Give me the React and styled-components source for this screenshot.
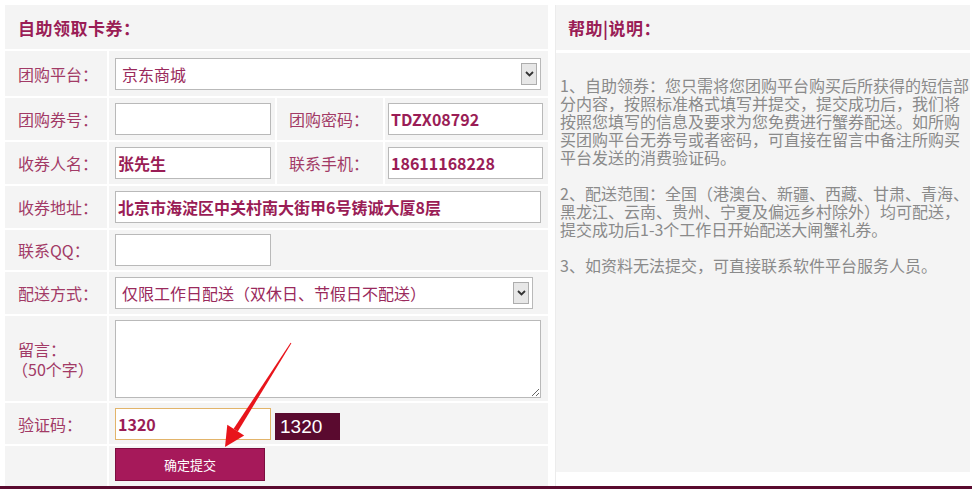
import React from "react";
import styled, { createGlobalStyle } from "styled-components";

const GlobalStyle = createGlobalStyle`
  html, body {
    margin: 0;
    padding: 0;
    background: #fff;
    font-family: "Noto Sans CJK SC", "Microsoft YaHei", sans-serif;
  }
`;

const Page = styled.div`
  position: relative;
  width: 972px;
  height: 489px;
  overflow: hidden;
  background: #fff;
`;

const Main = styled.div`
  display: flex;
  gap: 7px;
  padding: 5px 2px 0 5px;
`;

const FormTable = styled.div`
  display: grid;
  grid-template-columns: 102px 166px 106px 163px;
  grid-template-rows: 44px 45px 42px 42px 42px 40px 42px 85px 41px 40px;
  gap: 2px;
  width: 543px;
  background: #fff;
`;

const Cell = styled.div`
  display: flex;
  align-items: center;
  background: #f4f4f4;
  grid-column: ${(p) => (p.$span ? `span ${p.$span}` : "auto")};
  padding-left: ${(p) => p.$pad || 6}px;
  box-sizing: border-box;
  min-width: 0;
`;

const Title = styled.h2`
  margin: 0;
  font-size: 17px;
  font-weight: bold;
  color: #9a1d56;
  letter-spacing: 0.5px;
`;

const Label = styled.div`
  font-size: 16px;
  color: #a23a66;
  line-height: 20px;
  white-space: nowrap;
`;

const LabelNote = styled.span`
  display: block;
  margin-left: -6px;
`;

const TextInput = styled.div`
  box-sizing: border-box;
  width: ${(p) => p.$w}px;
  height: 32px;
  background: #fff;
  border: 1px solid ${(p) => (p.$focus ? "#e2b46a" : "#b9b9b9")};
  display: flex;
  align-items: center;
  padding-left: 2px;
  font-size: 16px;
  font-weight: bold;
  color: #9a1d56;
  white-space: nowrap;
`;

const SelectBox = styled.div`
  box-sizing: border-box;
  width: ${(p) => p.$w}px;
  height: 32px;
  background: #fff;
  border: 1px solid #b9b9b9;
  display: flex;
  align-items: center;
  justify-content: space-between;
  padding: 0 3px 0 6px;
  font-size: 16px;
  color: #9a2a5c;
  white-space: nowrap;
`;

const ArrowBtn = styled.span`
  box-sizing: border-box;
  width: 16px;
  height: 22px;
  border: 1px solid #adadad;
  background: #e7e7e7;
  display: flex;
  align-items: center;
  justify-content: center;
`;

const MessageArea = styled.textarea`
  box-sizing: border-box;
  width: 426px;
  height: 78px;
  border: 1px solid #b9b9b9;
  background: #fff;
  outline: none;
`;

const Captcha = styled.div`
  width: 65px;
  height: 27px;
  margin: 6px 0 0 4px;
  background: #5a0a2f;
  color: #fff;
  font-family: "Liberation Sans", Arial, sans-serif;
  font-size: 19px;
  line-height: 27px;
  padding-left: 5px;
  box-sizing: border-box;
`;

const SubmitButton = styled.button`
  width: 150px;
  height: 33px;
  margin-top: -4px;
  background: #a6195a;
  border: 1px solid #7b0f3f;
  color: #fff;
  font-family: "Noto Sans CJK SC", sans-serif;
  font-size: 13px;
  padding: 0;
  cursor: pointer;
`;

const HelpColumn = styled.div`
  flex: 1;
  display: flex;
  flex-direction: column;
  gap: 3px;
  border-left: 1px solid #ececec;
`;

const HelpHead = styled.div`
  height: 45px;
  background: #f4f4f4;
  display: flex;
  align-items: center;
  padding-left: 12px;
`;

const HelpBody = styled.div`
  height: 419px;
  background: #f4f4f4;
  padding: 23px 0 0 4px;
  box-sizing: border-box;
  font-size: 16px;
  line-height: 18px;
  color: #8a8a8a;
`;

const HelpPara = styled.p`
  margin: 0 0 18px;
`;

const FooterBar = styled.div`
  position: absolute;
  left: 0;
  right: 0;
  bottom: 0;
  height: 3px;
  background: #5a0a2f;
`;

const Annotation = styled.svg`
  position: absolute;
  left: 0;
  top: 0;
  pointer-events: none;
`;

const Chevron = () => (
  <svg width="9" height="6" viewBox="0 0 9 6">
    <path d="M1 1 L4.5 4.5 L8 1" fill="none" stroke="#333" strokeWidth="1.8" />
  </svg>
);

const Select = ({ width, children }) => (
  <SelectBox $w={width}>
    <span>{children}</span>
    <ArrowBtn>
      <Chevron />
    </ArrowBtn>
  </SelectBox>
);

const App = () => (
  <Page>
    <GlobalStyle />
    <Main>
      <FormTable>
        <Cell $span={4} $pad={13}>
          <Title>自助领取卡券：</Title>
        </Cell>

        <Cell $pad={13}><Label>团购平台：</Label></Cell>
        <Cell $span={3}>
          <Select width={426}>京东商城</Select>
        </Cell>

        <Cell $pad={13}><Label>团购券号：</Label></Cell>
        <Cell><TextInput $w={156} /></Cell>
        <Cell $pad={12}><Label>团购密码：</Label></Cell>
        <Cell $pad={3}><TextInput $w={155}>TDZX08792</TextInput></Cell>

        <Cell $pad={13}><Label>收券人名：</Label></Cell>
        <Cell><TextInput $w={156}>张先生</TextInput></Cell>
        <Cell $pad={12}><Label>联系手机：</Label></Cell>
        <Cell $pad={3}><TextInput $w={155}>18611168228</TextInput></Cell>

        <Cell $pad={13}><Label>收券地址：</Label></Cell>
        <Cell $span={3}>
          <TextInput $w={426}>北京市海淀区中关村南大街甲6号铸诚大厦8层</TextInput>
        </Cell>

        <Cell $pad={13}><Label>联系QQ：</Label></Cell>
        <Cell $span={3}><TextInput $w={156} /></Cell>

        <Cell $pad={13}><Label>配送方式：</Label></Cell>
        <Cell $span={3}>
          <Select width={418}>仅限工作日配送（双休日、节假日不配送）</Select>
        </Cell>

        <Cell $pad={13}>
          <Label>
            留言：
            <LabelNote>（50个字）</LabelNote>
          </Label>
        </Cell>
        <Cell $span={3}><MessageArea /></Cell>

        <Cell $pad={13}><Label>验证码：</Label></Cell>
        <Cell $span={3}>
          <TextInput $w={156} $focus>1320</TextInput>
          <Captcha>1320</Captcha>
        </Cell>

        <Cell />
        <Cell $span={3}>
          <SubmitButton>确定提交</SubmitButton>
        </Cell>
      </FormTable>

      <HelpColumn>
        <HelpHead>
          <Title>帮助|说明：</Title>
        </HelpHead>
        <HelpBody>
          <HelpPara>
            1、自助领券：您只需将您团购平台购买后所获得的短信部分内容，按照标准格式填写并提交，提交成功后，我们将按照您填写的信息及要求为您免费进行蟹券配送。如所购买团购平台无券号或者密码，可直接在留言中备注所购买平台发送的消费验证码。
          </HelpPara>
          <HelpPara>
            2、配送范围：全国（港澳台、新疆、西藏、甘肃、青海、黑龙江、云南、贵州、宁夏及偏远乡村除外）均可配送，提交成功后1-3个工作日开始配送大闸蟹礼券。
          </HelpPara>
          <HelpPara>3、如资料无法提交，可直接联系软件平台服务人员。</HelpPara>
        </HelpBody>
      </HelpColumn>
    </Main>
    <FooterBar />

    <Annotation width="972" height="489" viewBox="0 0 972 489">
      <polygon
        points="291.4,343.3 290.6,342.7 233.6,428.8 237.8,431.4"
        fill="#e8141b"
      />
      <polygon points="225,447 227.3,424.7 244.2,435.5" fill="#e8141b" />
    </Annotation>
  </Page>
);

export default App;
